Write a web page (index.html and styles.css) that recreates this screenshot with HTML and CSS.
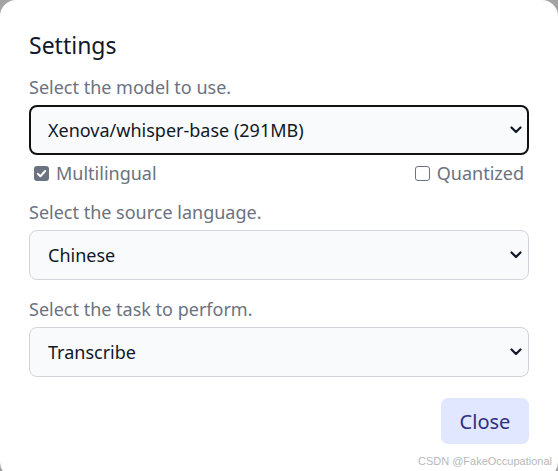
FILE: index.html
```html
<!DOCTYPE html>
<html lang="en">
<head>
<meta charset="utf-8">
<title>Settings</title>
<link rel="stylesheet" href="styles.css">
</head>
<body>
<div class="dialog">
  <h2 class="title">Settings</h2>

  <label class="label">Select the model to use.</label>
  <div class="select-wrap">
    <select class="select focused">
      <option>Xenova/whisper-base (291MB)</option>
    </select>
    <svg class="chevron" viewBox="0 0 12 8" width="12" height="8"><path d="M1.5 1.5 L6 6 L10.5 1.5" fill="none" stroke="#111827" stroke-width="2.2" stroke-linecap="round" stroke-linejoin="round"/></svg>
  </div>

  <div class="checks">
    <label class="check">
      <span class="box checked"><svg viewBox="0 0 15 15" width="15" height="15"><path d="M3.8 7.7 L6.4 10.2 L11.2 5" fill="none" stroke="#fff" stroke-width="2" stroke-linecap="round" stroke-linejoin="round"/></svg></span>
      Multilingual
    </label>
    <label class="check">
      <span class="box"></span>
      Quantized
    </label>
  </div>

  <label class="label">Select the source language.</label>
  <div class="select-wrap">
    <select class="select">
      <option>Chinese</option>
    </select>
    <svg class="chevron" viewBox="0 0 12 8" width="12" height="8"><path d="M1.5 1.5 L6 6 L10.5 1.5" fill="none" stroke="#111827" stroke-width="2.2" stroke-linecap="round" stroke-linejoin="round"/></svg>
  </div>

  <label class="label label-task">Select the task to perform.</label>
  <div class="select-wrap">
    <select class="select">
      <option>Transcribe</option>
    </select>
    <svg class="chevron" viewBox="0 0 12 8" width="12" height="8"><path d="M1.5 1.5 L6 6 L10.5 1.5" fill="none" stroke="#111827" stroke-width="2.2" stroke-linecap="round" stroke-linejoin="round"/></svg>
  </div>

  <div class="actions">
    <button class="close">Close</button>
  </div>
</div>
<div class="watermark">CSDN @FakeOccupational</div>
</body>
</html>
```

FILE: styles.css
```css
html, body {
  margin: 0;
  padding: 0;
  height: 100%;
  overflow: hidden;
}
body {
  background: #a3a3a3;
  font-family: "Noto Sans", "Open Sans", sans-serif;
  position: relative;
}
.dialog {
  background: #ffffff;
  border-radius: 16px;
  height: 478px;
  box-sizing: border-box;
  padding: 27px 29px 0 29px;
}
.title {
  margin: 0 0 10px 0;
  font-size: 23px;
  font-weight: 400;
  line-height: 36px;
  color: #111827;
}
.label {
  display: block;
  font-size: 18px;
  line-height: 28px;
  color: #6b7280;
  margin-bottom: 4px;
}
.select-wrap {
  position: relative;
}
.select {
  appearance: none;
  -webkit-appearance: none;
  display: block;
  width: 100%;
  height: 50px;
  box-sizing: border-box;
  border: 1px solid #d1d5db;
  border-radius: 8px;
  background: #f9fafb;
  font-family: inherit;
  font-size: 18px;
  color: #111827;
  padding: 0 40px 0 18px;
  outline: none;
}
.select.focused {
  border: 2px solid #111111;
  padding-left: 17px;
}
.chevron {
  position: absolute;
  right: 7px;
  top: 50%;
  margin-top: -4px;
  pointer-events: none;
}
.checks {
  display: flex;
  justify-content: space-between;
  align-items: center;
  padding: 0 5px 0 5px;
  margin: 7px 0 14px 0;
  height: 22px;
}
.check {
  display: flex;
  align-items: center;
  gap: 7px;
  font-size: 18px;
  line-height: 22px;
  color: #6b7280;
}
.box {
  width: 15px;
  height: 15px;
  box-sizing: border-box;
  border: 1.5px solid #6b7280;
  border-radius: 3px;
  display: inline-flex;
  background: #fff;
}
.box.checked {
  background: #6b7280;
  border: none;
}
.select-wrap + .label {
  margin-top: 14px;
}
.label-task {
  margin-top: 15px !important;
}
.actions {
  display: flex;
  justify-content: flex-end;
  margin-top: 21px;
}
.close {
  background: #e0e7ff;
  color: #312e81;
  border: none;
  border-radius: 7px;
  font-family: inherit;
  font-size: 20px;
  width: 88px;
  height: 46px;
  padding: 0;
}
.watermark {
  position: absolute;
  right: 6px;
  bottom: 4px;
  font-family: "Liberation Sans", sans-serif;
  font-size: 11px;
  color: #b8b8b8;
}
```
